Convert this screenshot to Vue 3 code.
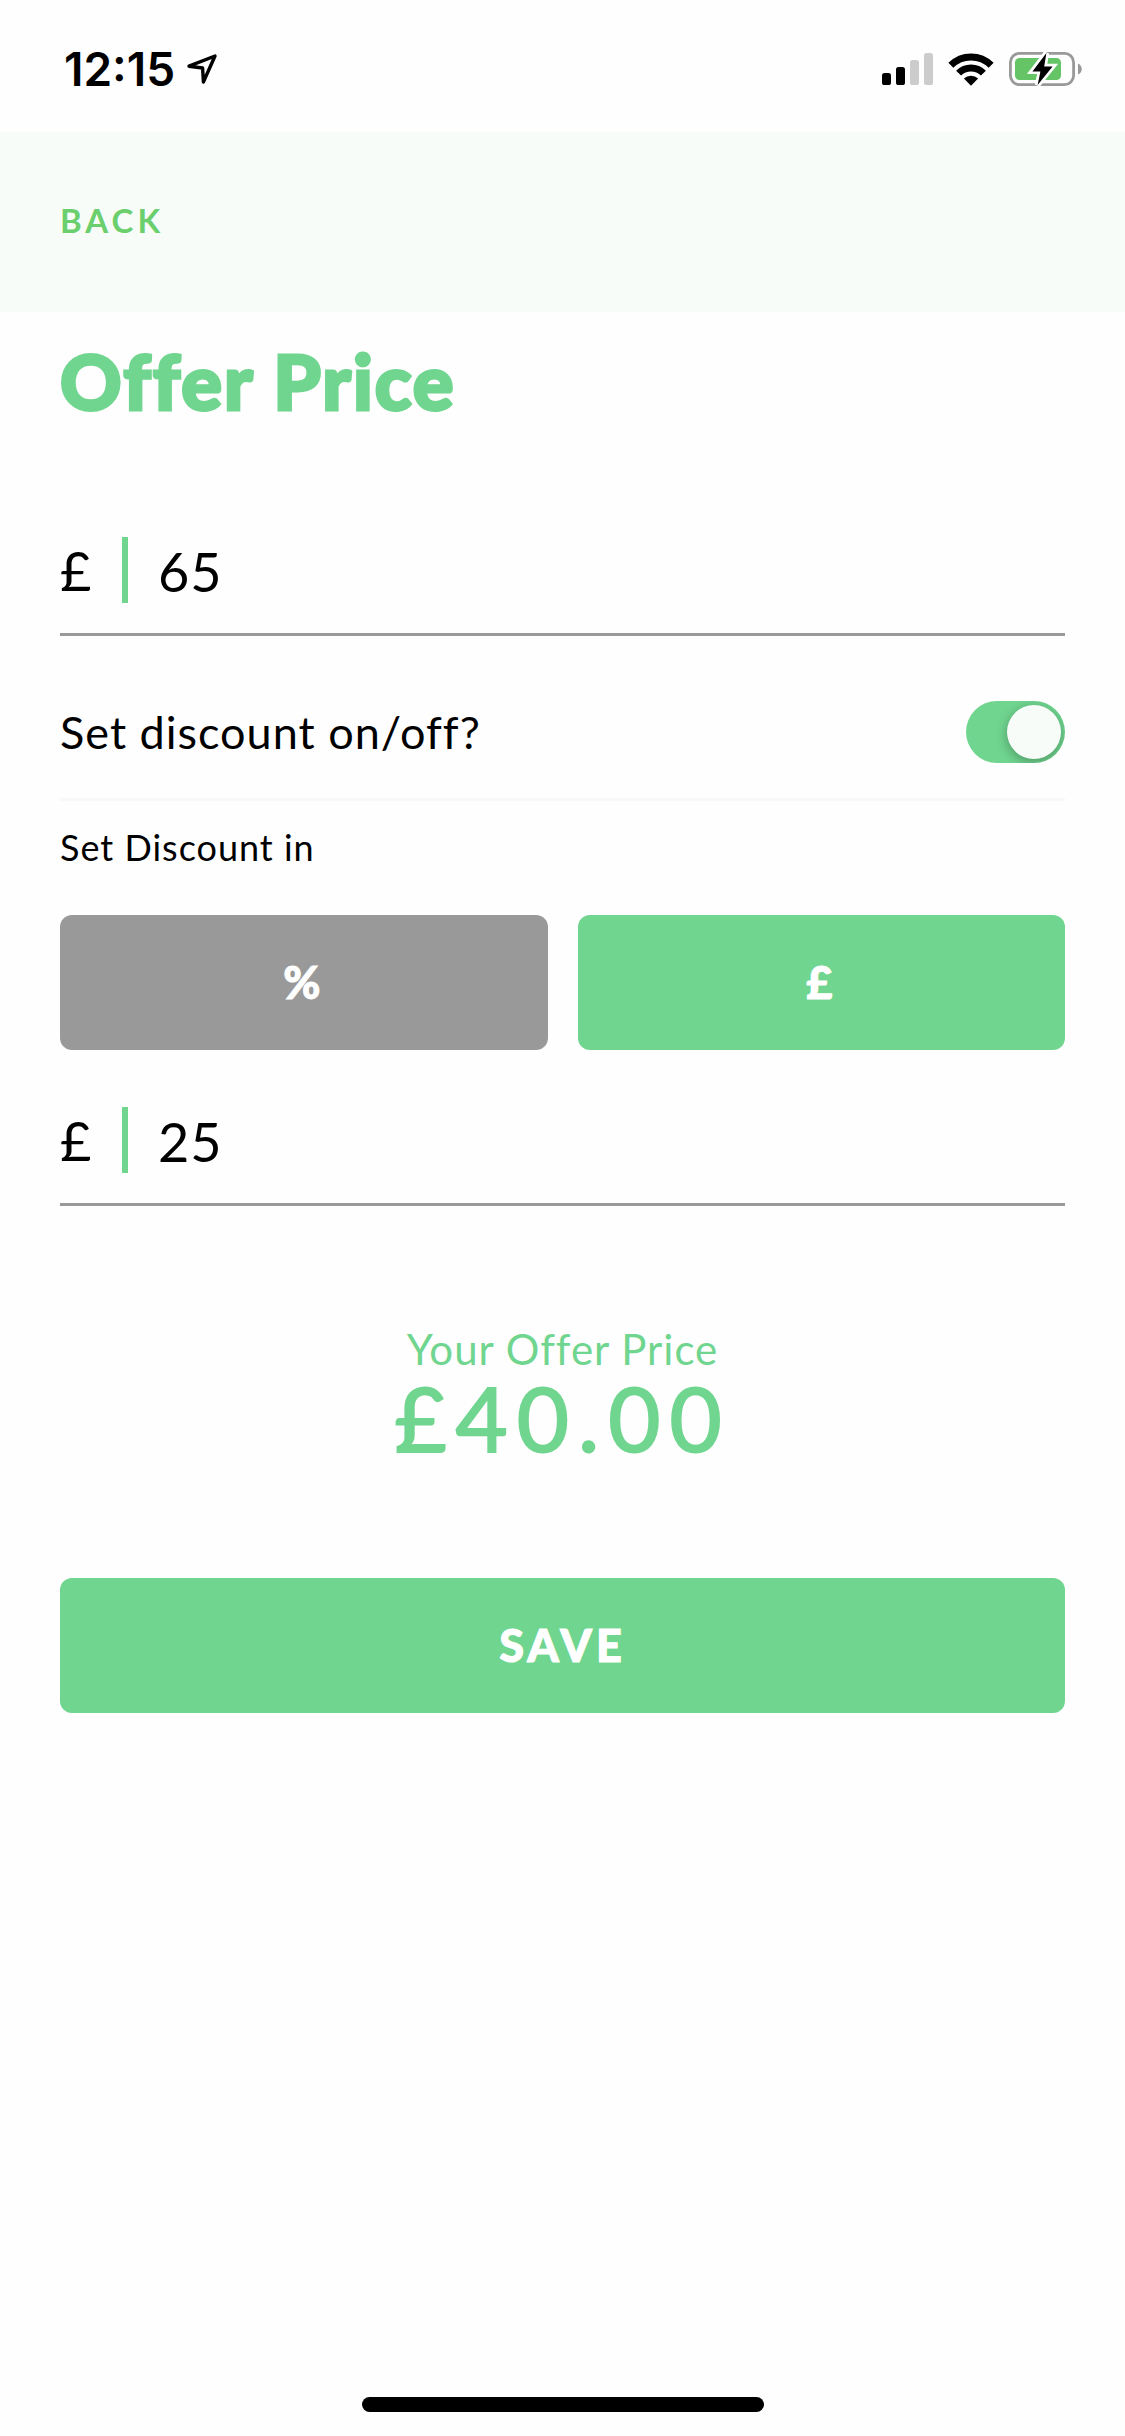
<script setup>
import { computed, ref } from 'vue'

const price = ref('65')
const discount = ref('25')
const discountOn = ref(true)
const unit = ref('£')
const units = ['%', '£']

const offerPrice = computed(() => {
  const base = Number(price.value) || 0
  const cut = discountOn.value ? Number(discount.value) || 0 : 0
  const result = unit.value === '%' ? base * (1 - cut / 100) : base - cut
  return '£' + Math.max(result, 0).toFixed(2)
})
</script>

<template>
  <div class="screen">
    <div class="status">
      <div class="status-group">
        <span class="time">12:15</span>
        <svg width="30" height="30" viewBox="0 0 30 30" aria-hidden="true">
          <path d="M2 12.2 28 2 16.4 28 15.6 14Z" fill="none" stroke="#000" stroke-width="3.4" stroke-linejoin="round" />
        </svg>
      </div>
      <div class="status-group icons">
        <svg width="51" height="33" viewBox="0 0 51 33" aria-hidden="true">
          <rect x="0" y="20" width="9" height="12" rx="2.6" />
          <rect x="14" y="14" width="9" height="18" rx="2.6" />
          <rect x="28" y="7" width="9" height="25" rx="2.6" fill="#ccc" />
          <rect x="42" y="0" width="9" height="32" rx="2.6" fill="#ccc" />
        </svg>
        <svg width="46" height="33" viewBox="0 0 46 33" aria-hidden="true">
          <g fill="none" stroke="#000" stroke-width="7">
            <path d="M2.85 12.35A28.5 28.5 0 0 1 43.15 12.35" />
            <path d="M10.6 20.1A17.5 17.5 0 0 1 35.4 20.1" />
          </g>
          <path d="M15.9 25.6A10 10 0 0 1 30.1 25.6L23 32.8Z" />
        </svg>
        <svg width="73" height="38" viewBox="0 0 73 38" aria-hidden="true">
          <rect x="1.4" y="3.4" width="63.2" height="31.2" rx="9" fill="none" stroke="#999" stroke-width="2.8" />
          <path d="M69 13.4Q72.8 15.4 72.8 19T69 24.6Z" fill="#999" />
          <rect x="6" y="8" width="46" height="22" rx="4.6" fill="#65c466" />
          <path d="M37.4 3 23.4 21.4H31.4L28.6 35 43.6 16.4H35.2Z" stroke="#fff" stroke-width="5.4" />
          <path d="M37.4 3 23.4 21.4H31.4L28.6 35 43.6 16.4H35.2Z" />
        </svg>
      </div>
    </div>

    <header class="nav">
      <a class="back" href="#">BACK</a>
    </header>

    <main class="content">
      <h1 class="title">Offer Price</h1>

      <div class="field">
        <label class="currency" for="price">£</label>
        <input id="price" v-model="price" class="amount" type="text" inputmode="decimal" />
      </div>

      <div class="toggle-row">
        <label for="discount-on">Set discount on/off?</label>
        <input id="discount-on" v-model="discountOn" class="switch" type="checkbox" role="switch" />
      </div>

      <p id="unit-label" class="caption">Set Discount in</p>
      <div class="units" role="group" aria-labelledby="unit-label">
        <button
          v-for="u in units"
          :key="u"
          class="button"
          :class="{ muted: u !== unit }"
          type="button"
          :aria-pressed="u === unit"
          @click="unit = u"
        >{{ u }}</button>
      </div>

      <div class="field discount">
        <label class="currency" for="discount">£</label>
        <input id="discount" v-model="discount" class="amount" type="text" inputmode="decimal" />
      </div>

      <section class="summary">
        <p class="summary-label">Your Offer Price</p>
        <p class="summary-price">{{ offerPrice }}</p>
      </section>

      <button class="button save" type="button">SAVE</button>
    </main>

    <div class="home-indicator"></div>
  </div>
</template>

<style>
body {
  margin: 0;
  background: #fefefe;
}
</style>

<style scoped>
.screen {
  --green: #70d58f;
  --grey: #999;
  box-sizing: border-box;
  display: flex;
  flex-direction: column;
  min-height: 100vh;
  padding-bottom: 24px;
  color: #000;
  font-family: Lato, sans-serif;
}

p,
h1 {
  margin: 0;
}

.status {
  display: flex;
  justify-content: space-between;
  align-items: center;
  height: 132px;
  padding: 6px 43px 0 64px;
  box-sizing: border-box;
}

.status-group {
  display: flex;
  align-items: center;
  gap: 12px;
}

.icons {
  gap: 15px;
}

.time {
  font: 600 46px/54px Inter, sans-serif;
}

.nav {
  display: flex;
  padding: 70px 60px 74px;
  background: #f7fcf9;
}

.back {
  color: #6bcf6e;
  font-size: 33px;
  font-weight: 700;
  line-height: 36px;
  letter-spacing: 4px;
  text-decoration: none;
}

.content {
  display: flex;
  flex-direction: column;
  padding: 24px 60px;
}

.title {
  color: var(--green);
  font-size: 76px;
  font-weight: 900;
  line-height: 90px;
  letter-spacing: 2px;
  -webkit-text-stroke: 3px var(--green);
}

.field {
  display: flex;
  margin-top: 111px;
  padding-bottom: 30px;
  border-bottom: 3px solid var(--grey);
  font-size: 54px;
  letter-spacing: 1px;
}

.field.discount {
  margin-top: 57px;
}

.currency {
  flex: none;
  width: 62px;
  height: 66px;
  line-height: 68px;
}

.amount {
  flex: 1;
  min-width: 0;
  height: 66px;
  box-sizing: border-box;
  padding: 2px 0 0 30px;
  border: 0;
  border-left: 6px solid var(--green);
  outline: 0;
  background: none;
  color: inherit;
  font: inherit;
  letter-spacing: inherit;
}

.toggle-row {
  display: flex;
  justify-content: space-between;
  align-items: center;
  padding: 65px 0 35px;
  border-bottom: 3px solid #f8f8f8;
  font-size: 45px;
  line-height: 62px;
  letter-spacing: 1px;
}

.switch {
  appearance: none;
  display: flex;
  width: 99px;
  height: 62px;
  margin: 0;
  padding: 4px;
  box-sizing: border-box;
  overflow: hidden;
  border-radius: 31px;
  background: var(--grey);
}

.switch::before {
  content: '';
  width: 54px;
  height: 54px;
  border-radius: 50%;
  background: #f7fcf9;
  box-shadow: 0 3px 12px rgba(0, 0, 0, 0.3);
}

.switch:checked {
  justify-content: flex-end;
  background: var(--green);
}

.caption {
  margin: 23px 0 45px;
  font-size: 36px;
  line-height: 46px;
  letter-spacing: 1px;
}

.units {
  display: grid;
  grid-template-columns: 1fr 1fr;
  gap: 30px;
}

.button {
  height: 135px;
  padding: 0 0 2px;
  border: 0;
  border-radius: 12px;
  background: var(--green);
  color: #fff;
  font: 900 45px/54px Lato, sans-serif;
  letter-spacing: 4px;
  -webkit-text-stroke: 1px #fff;
}

.button.muted {
  background: var(--grey);
}

.summary {
  margin: 118px 0;
  color: var(--green);
  text-align: center;
}

.summary-label {
  font-size: 42px;
  line-height: 50px;
  letter-spacing: 1px;
}

.summary-price {
  font-size: 90px;
  line-height: 86px;
  letter-spacing: 9px;
  -webkit-text-stroke: 2px var(--green);
}

.home-indicator {
  align-self: center;
  width: 36%;
  max-width: 402px;
  height: 15px;
  margin-top: auto;
  border-radius: 8px;
  background: #000;
}
</style>
